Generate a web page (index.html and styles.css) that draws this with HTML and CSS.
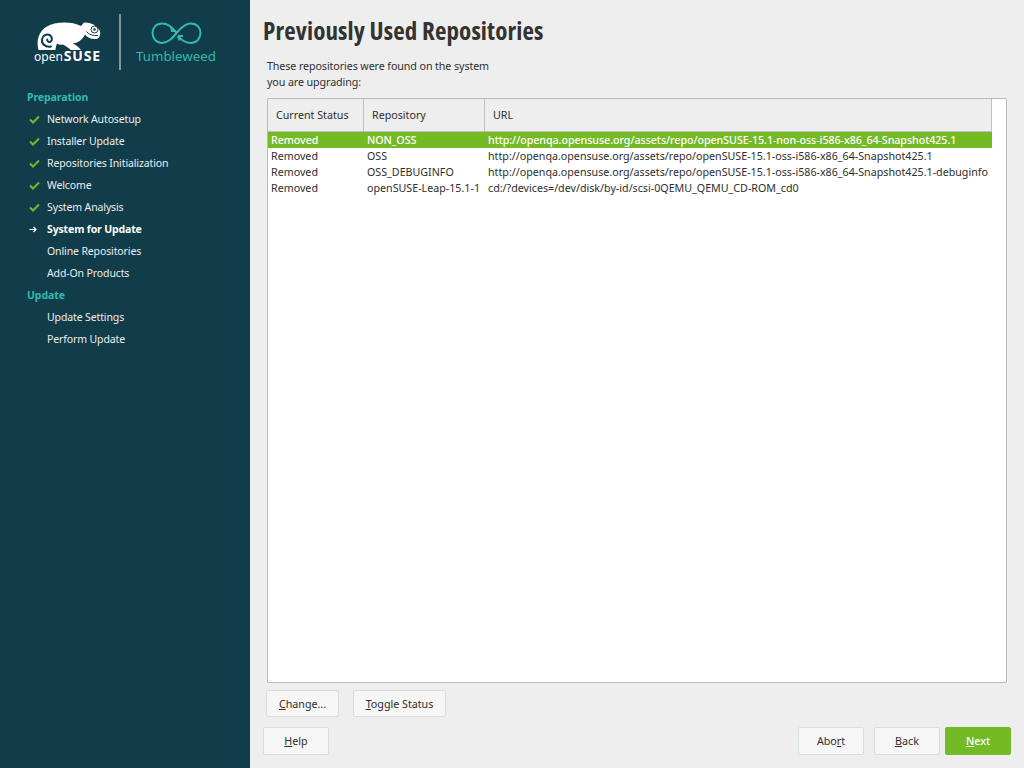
FILE: index.html
```html
<!DOCTYPE html>
<html lang="en">
<head>
<meta charset="utf-8">
<title>Previously Used Repositories</title>
<link rel="stylesheet" href="styles.css">
</head>
<body>
<div class="app">
  <aside class="sidebar">
    <svg class="logo" width="250" height="86" viewBox="0 0 250 86">
      <path class="cham" d="M38.500 50C36 41 38.500 32 46 27C55 21.500 71 21 81 26L84 22.500C90 22 96.500 25 99.500 30C101 34 100 38.500 96 39C91 39.500 87 37.500 85 34.500C83 38 81 41 77 42.500L73 43.500C76 45 79 47 81 50H71C68 47.500 65 45.500 63 44.500C60 45 57.500 44.500 57 43.500C56 46 55.500 48 55.500 50Z"/>
      <path class="spiral" d="M51 46.500C45 47.500 41.500 43.500 42 39.500C42.500 35.500 46.500 33.500 49.500 35C52.500 36.500 52.500 40.500 50.500 41.700C48.500 42.500 47 41 47.300 39.500"/>
      <circle class="eye" cx="94.500" cy="29.500" r="3.500"/>
      <circle class="pupil" cx="94.500" cy="29.500" r="1.300"/>
      <path class="mouth" d="M86.500 31.500C88.500 34.500 93 36 98 35.500"/>
      <text class="open" x="34" y="61">open<tspan class="suse" dx="1">SUSE</tspan></text>
      <line class="divider" x1="120" y1="14" x2="120" y2="70"/>
      <path class="inf" d="M176.500 33C171 25 166 23.500 162 23.500C156 23.500 152.500 28 152.500 33C152.500 38 156 43 162 43C168 43 172 38.500 176.500 33C181 27.500 185 23.500 191 23.500C197 23.500 200.500 28 200.500 33C200.500 38 197 43 191 43C187 43 182 41 178 36"/>
      <path class="inf" d="M172 31L171 26.500M171 31L176 31"/>
      <path class="inf" d="M178 36L183 36M178 36L179.500 40.500"/>
      <text class="tw" x="136" y="61">Tumbleweed</text>
    </svg>
    <nav class="steps">
      <div class="stage">Preparation</div>
      <div class="step"><span class="mark">
        <svg width="11" height="9" viewBox="0 0 11 9"><path class="check" d="M1 4.500L4 7.500L10 1.500"/></svg></span>Network Autosetup</div>
      <div class="step"><span class="mark">
        <svg width="11" height="9" viewBox="0 0 11 9"><path class="check" d="M1 4.500L4 7.500L10 1.500"/></svg></span>Installer Update</div>
      <div class="step"><span class="mark">
        <svg width="11" height="9" viewBox="0 0 11 9"><path class="check" d="M1 4.500L4 7.500L10 1.500"/></svg></span>Repositories Initialization</div>
      <div class="step"><span class="mark">
        <svg width="11" height="9" viewBox="0 0 11 9"><path class="check" d="M1 4.500L4 7.500L10 1.500"/></svg></span>Welcome</div>
      <div class="step"><span class="mark">
        <svg width="11" height="9" viewBox="0 0 11 9"><path class="check" d="M1 4.500L4 7.500L10 1.500"/></svg></span>System Analysis</div>
      <div class="step current"><span class="mark">
        <svg width="8" height="7" viewBox="0 0 8 7"><path class="arrow" d="M0.500 3.500H7M4.500 1L7 3.500L4.500 6"/></svg></span>System for Update</div>
      <div class="step"><span class="mark"></span>Online Repositories</div>
      <div class="step"><span class="mark"></span>Add-On Products</div>
      <div class="stage">Update</div>
      <div class="step"><span class="mark"></span>Update Settings</div>
      <div class="step"><span class="mark"></span>Perform Update</div>
    </nav>
  </aside>
  <main class="main">
    <h1 class="title">Previously Used Repositories</h1>
    <div class="content">
      <p class="intro">These repositories were found on the system<br>you are upgrading:</p>
      <div class="table">
        <div class="thead">
          <div class="th c1">Current Status</div>
          <div class="th c2">Repository</div>
          <div class="th c3">URL</div>
        </div>
        <div class="row selected"><span class="c1">Removed</span><span class="c2">NON_OSS</span><span class="c3">http://openqa.opensuse.org/assets/repo/openSUSE-15.1-non-oss-i586-x86_64-Snapshot425.1</span></div>
        <div class="row"><span class="c1">Removed</span><span class="c2">OSS</span><span class="c3">http://openqa.opensuse.org/assets/repo/openSUSE-15.1-oss-i586-x86_64-Snapshot425.1</span></div>
        <div class="row"><span class="c1">Removed</span><span class="c2">OSS_DEBUGINFO</span><span class="c3">http://openqa.opensuse.org/assets/repo/openSUSE-15.1-oss-i586-x86_64-Snapshot425.1-debuginfo</span></div>
        <div class="row"><span class="c1">Removed</span><span class="c2">openSUSE-Leap-15.1-1</span><span class="c3">cd:/?devices=/dev/disk/by-id/scsi-0QEMU_QEMU_CD-ROM_cd0</span></div>
      </div>
      <div class="table-actions">
        <button class="btn change"><u>C</u>hange...</button>
        <button class="btn toggle"><u>T</u>oggle Status</button>
      </div>
    </div>
    <div class="footer">
      <button class="btn wide"><u>H</u>elp</button>
      <div class="spacer"></div>
      <button class="btn wide">Abo<u>r</u>t</button>
      <button class="btn wide back"><u>B</u>ack</button>
      <button class="btn wide next"><u>N</u>ext</button>
    </div>
  </main>
</div>
</body>
</html>
```
FILE: styles.css
```css
* { box-sizing: border-box; }
html, body { margin: 0; padding: 0; }
body { width: 1024px; height: 768px; overflow: hidden; font-family: "Noto Sans", "Open Sans", sans-serif; font-size: 10.700px; color: #2e2e2e; }
.app { display: flex; width: 1024px; height: 768px; }

.sidebar { width: 250px; flex: none; background: #113c4a; color: #eeeeee; }
.logo { display: block; }
.cham { fill: #ffffff; }
.spiral { fill: none; stroke: #113c4a; stroke-width: 2; stroke-linecap: round; }
.eye { fill: #ffffff; stroke: #113c4a; stroke-width: 1; }
.pupil { fill: #113c4a; }
.mouth { fill: none; stroke: #113c4a; stroke-width: 1; }
.open { fill: #ffffff; font-size: 12px; }
.suse { font-size: 14px; font-weight: 700; letter-spacing: 0.800px; }
.divider { stroke: #a8b4b8; stroke-width: 1.500; }
.inf { fill: none; stroke: #35b9ab; stroke-width: 2; }
.tw { fill: #35b9ab; font-size: 13.300px; }

.steps { display: flex; flex-direction: column; font-size: 10.500px; letter-spacing: -0.120px; }
.stage { height: 22px; line-height: 22px; padding-left: 27px; font-weight: 700; color: #35b9ab; letter-spacing: -0.080px; }
.step { display: flex; align-items: center; height: 22px; padding-left: 29px; color: #eeeeee; }
.step.current { font-weight: 700; color: #ffffff; letter-spacing: -0.150px; }
.mark { display: flex; align-items: center; width: 18px; flex: none; }
.check { fill: none; stroke: #73ba25; stroke-width: 2; }
.arrow { fill: none; stroke: #ffffff; stroke-width: 1.200; }

.main { flex: 1; display: flex; flex-direction: column; background: #eeeeee; padding: 0 13px 13px; }
.title { margin: 0; height: 58px; padding-top: 12px; font-family: "Open Sans", sans-serif; font-stretch: 75%; font-weight: 700; font-size: 25px; line-height: 36px; letter-spacing: 0.120px; color: #333333; }
.content { flex: 1; display: flex; flex-direction: column; padding: 0 4px; min-height: 0; }
.intro { margin: 0 0 9px; height: 31px; line-height: 16px; letter-spacing: -0.090px; }

.table { flex: 1; background: #ffffff; border: 1px solid #b8bcb8; border-radius: 1px; }
.thead { display: flex; width: 724px; height: 33px; border-bottom: 1px solid #c0c0c0; background: #eeeeee; border-right: 1px solid #c0c0c0; }
.th { display: flex; align-items: center; padding-left: 8px; border-right: 1px solid #c0c0c0; }
.th.c3 { border-right: 0; }
.c1 { width: 96px; flex: none; }
.c2 { width: 121px; flex: none; }
.c3 { flex: 1; white-space: nowrap; }
.row { display: flex; width: 724px; height: 16px; line-height: 16px; }
.row span { padding-left: 3px; }
.row.selected { background: #73ba25; color: #ffffff; font-weight: 500; letter-spacing: -0.060px; }

.table-actions { display: flex; gap: 14px; margin: 7px 0 10px -1px; }
.btn { height: 27px; padding: 0; font-family: inherit; font-size: 10.700px; color: #2e2e2e; background: #f6f6f6; border: 1px solid #d6e0d6; border-radius: 2px; }
.change { width: 73px; }
.toggle { width: 93px; }
.footer { display: flex; }
.spacer { flex: 1; }
.wide { width: 66px; height: 28px; }
.back { margin-left: 10px; margin-right: 5px; }
.next { background: #73ba25; border-color: #73ba25; color: #ffffff; font-weight: 500; }
```
